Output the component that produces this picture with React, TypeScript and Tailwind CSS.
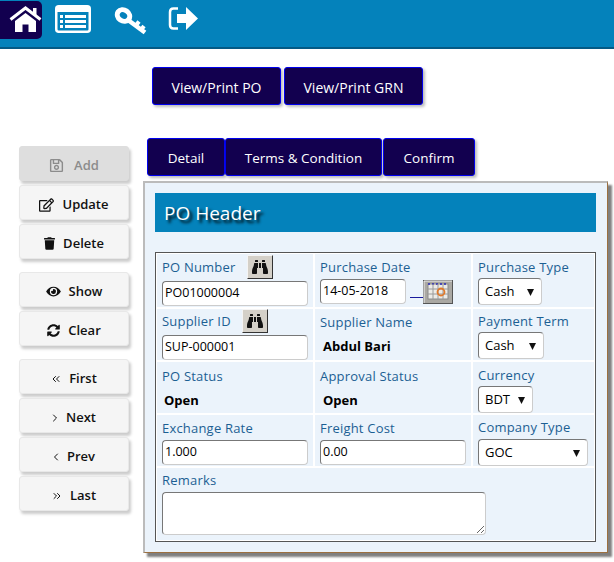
import type { ReactNode } from 'react';
import {
  FaRegSave,
  FaRegEdit,
  FaTrash,
  FaEye,
  FaSyncAlt,
  FaBinoculars,
} from 'react-icons/fa';
import { ChevronLeft, ChevronRight, ChevronsLeft, ChevronsRight } from 'lucide-react';

const fieldBorder =
  'border border-[#ccc] border-t-[#777] border-l-[#777] rounded-[4px] bg-white';
const cell = 'bg-[#ebf3fb] pl-[5px]';
const boldValue = 'mt-[6px] text-[13px] leading-[18px] font-bold text-black';

function SideButton({
  icon,
  label,
  disabled,
}: {
  icon: ReactNode;
  label: string;
  disabled?: boolean;
}) {
  return (
    <button
      className={`w-[110px] h-[35px] pt-[4px] flex items-center justify-center gap-[8px] rounded-[3px] border font-semibold text-[13px] shadow-[2px_3px_3px_#ccc] ${
        disabled
          ? 'bg-[#dedede] border-[#dedede] text-[#8c8c8c]'
          : 'bg-[#f5f5f5] border-[#e8e8e8] text-[#111]'
      }`}
    >
      {icon}
      {label}
    </button>
  );
}

function NavyButton({ label, className }: { label: string; className: string }) {
  return (
    <button
      className={`h-[38px] pt-[2px] flex items-center justify-center rounded-[3px] border border-[#0000ee] bg-[#12004f] text-white font-medium shadow-[2px_2px_3px_#bbb] ${className}`}
    >
      {label}
    </button>
  );
}

function Label({ children }: { children: ReactNode }) {
  return <div className="text-[13px] leading-[18px] text-[#1c5f93] tracking-[0.2px]">{children}</div>;
}

function TextBox({ value, className }: { value: string; className: string }) {
  return (
    <div className={`h-[25px] flex items-center pl-[2px] text-[12.5px] text-black ${fieldBorder} ${className}`}>
      {value}
    </div>
  );
}

function SelectBox({ value, className }: { value: string; className: string }) {
  return (
    <div className={`h-[27px] flex items-center justify-between pl-[6px] pr-[7px] text-[13px] text-black ${fieldBorder} ${className}`}>
      {value}
      <svg width="7" height="8" viewBox="0 0 7 8" className="block">
        <path d="M0 1h7L3.5 8z" fill="#111" />
      </svg>
    </div>
  );
}

function FindButton() {
  return (
    <button className="w-[26px] h-[24px] flex items-center justify-center bg-[#d4d0c8] border border-[#f4f4f4] border-r-[#333] border-b-[#333]">
      <FaBinoculars className="w-[18px] h-[16px] text-[#111]" />
    </button>
  );
}

function CalendarIcon() {
  return (
    <svg width="30" height="24" viewBox="0 0 30 24" className="block">
      <rect x="0.5" y="0.5" width="29" height="23" fill="#aaa8a3" stroke="#555" />
      <path d="M1 1h28M1 1v22" stroke="#f0f0f0" />
      <rect x="5" y="4" width="20" height="15" fill="#ecebe7" stroke="#8a8a8a" />
      <path d="M5 4h20" stroke="#2a2ab8" strokeWidth="1.500" strokeDasharray="2 2" />
      <path d="M10 4v15M15 4v15M20 4v15M5 9h20M5 14h20" stroke="#9a9a9a" />
      <circle cx="18" cy="12" r="3.5" fill="none" stroke="#e0792a" strokeWidth="1.800" />
    </svg>
  );
}

function HomeIcon() {
  return (
    <svg width="33" height="26" viewBox="0 0 33 26" className="block">
      <path d="M1.5 13.5 16.5 2l15 11.5" fill="none" stroke="#fff" strokeWidth="3" />
      <path d="M24 2h3.5v7H24z" fill="#fff" />
      <path d="M6 15 16.5 7 27 15v11h-7.500v-7.500h-6V26H6z" fill="#fff" />
    </svg>
  );
}

function ListIcon() {
  return (
    <svg width="36" height="28" viewBox="0 0 36 28" className="block">
      <rect x="1.250" y="1.250" width="33.500" height="25.500" rx="2.500" fill="#0482bb" stroke="#fff" strokeWidth="2.500" />
      <path d="M1 1h34v6H1z" fill="#fff" />
      <path
        d="M5 10h3v3H5zM10 10h21v3H10zM5 15h3v3H5zM10 15h21v3H10zM5 20h3v3H5zM10 20h21v3H10z"
        fill="#fff"
      />
    </svg>
  );
}

function KeyIcon() {
  return (
    <svg width="33" height="28" viewBox="0 0 33 28" className="block">
      <ellipse cx="9.500" cy="8.500" rx="6.500" ry="5.500" fill="none" stroke="#fff" strokeWidth="5" transform="rotate(35 9.500 8.500)" />
      <path d="M14 13 31 25.500" stroke="#fff" strokeWidth="4.500" fill="none" />
      <path d="m21.500 19 3.500-4.500M27 23l3-4" stroke="#fff" strokeWidth="4" fill="none" />
    </svg>
  );
}

function ExitIcon() {
  return (
    <svg width="30" height="25" viewBox="0 0 30 25" className="block">
      <path d="M10 2.500H5.500Q2 2.500 2 6v13q0 3.500 3.500 3.500H10" fill="none" stroke="#fff" strokeWidth="2.500" />
      <path d="M9 8h9V1l12 11.500L18 24v-7H9z" fill="#fff" />
    </svg>
  );
}

export default function App() {
  return (
    <div className="w-[614px] h-[562px] overflow-hidden bg-white [font-family:'Open_Sans','Noto_Sans',sans-serif]">
      <header className="h-[49px] bg-[#0482bb] border-b-[2px] border-[#045a85] flex items-start">
        <div className="relative w-[42px] h-[38px] mt-[1px] bg-[#12004f] rounded-r-[5px]">
          <div className="absolute left-[9px] top-[5px]">
            <HomeIcon />
          </div>
        </div>
        <div className="ml-[13px] mt-[5px]">
          <ListIcon />
        </div>
        <div className="ml-[23px] mt-[7px]">
          <KeyIcon />
        </div>
        <div className="ml-[21px] mt-[6px]">
          <ExitIcon />
        </div>
      </header>

      <div className="flex pl-[19px]">
        <aside className="pt-[97px] flex flex-col">
          <div className="flex flex-col gap-[4px]">
            <SideButton disabled label="Add" icon={<FaRegSave className="w-[15px] h-[15px] mr-[2px]" />} />
            <SideButton label="Update" icon={<FaRegEdit className="w-[15px] h-[14px]" />} />
            <SideButton label="Delete" icon={<FaTrash className="w-[11px] h-[13px]" />} />
          </div>
          <div className="flex flex-col gap-[4px] mt-[13px]">
            <SideButton label="Show" icon={<FaEye className="w-[15px] h-[13px]" />} />
            <SideButton label="Clear" icon={<FaSyncAlt className="w-[13px] h-[13px]" />} />
          </div>
          <div className="flex flex-col gap-[4px] mt-[13px]">
            <SideButton label="First" icon={<ChevronsLeft className="w-[12px] h-[12px] -mx-[1px]" />} />
            <SideButton label="Next" icon={<ChevronRight className="w-[12px] h-[12px] -mx-[3px]" />} />
            <SideButton label="Prev" icon={<ChevronLeft className="w-[12px] h-[12px] -mx-[3px]" />} />
            <SideButton label="Last" icon={<ChevronsRight className="w-[12px] h-[12px] -mx-[1px]" />} />
          </div>
        </aside>

        <main className="ml-[14px] flex flex-col">
          <div className="flex gap-[3px] ml-[9px] mt-[18px] text-[14px]">
            <NavyButton label="View/Print PO" className="w-[129px]" />
            <NavyButton label="View/Print GRN" className="w-[139px]" />
          </div>
          <div className="flex ml-[4px] mt-[33px] text-[13.5px]">
            <NavyButton label="Detail" className="w-[78px]" />
            <NavyButton label="Terms & Condition" className="w-[157px]" />
            <NavyButton label="Confirm" className="w-[92px] ml-[1px]" />
          </div>

          <section className="mt-[5px] w-[465px] h-[372px] bg-[#ebf3fb] border border-[#bbb] border-r-[#9c7040] border-b-[#9c7040] border-t-[2px] border-l-[2px] px-[10px] pt-[10px] shadow-[4px_4px_2px_#808080]">
            <h2 className="h-[39px] w-[441px] bg-[#0482bb] pl-[9px] pt-[2px] flex items-center text-white text-[19px] font-medium [text-shadow:3px_3px_3px_#000]">
              PO Header
            </h2>
            <div className="mt-[20px] w-[441px] h-[290px] bg-white border border-[#555] p-[1px] grid grid-cols-[156px_156px_121px] grid-rows-[53px_51px_51px_51px_72px] gap-[2px]">
              <div className={`${cell} pt-[1px]`}>
                <div className="flex items-center gap-[12px]">
                  <Label>PO Number</Label>
                  <FindButton />
                </div>
                <TextBox value="PO01000004" className="w-[146px] mt-[2px]" />
              </div>
              <div className={`${cell} pt-[4px]`}>
                <Label>Purchase Date</Label>
                <div className="flex items-end mt-[3px]">
                  <TextBox value="14-05-2018" className="w-[86px]" />
                  <span className="w-[13px] ml-[4px] mb-[6px] border-b border-[#1a1a9c]" />
                  <CalendarIcon />
                </div>
              </div>
              <div className={`${cell} pt-[4px]`}>
                <Label>Purchase Type</Label>
                <SelectBox value="Cash" className="w-[64px] mt-[2px]" />
              </div>

              <div className={cell}>
                <div className="flex items-center gap-[11px]">
                  <Label>Supplier ID</Label>
                  <FindButton />
                </div>
                <TextBox value="SUP-000001" className="w-[146px] mt-[2px]" />
              </div>
              <div className={`${cell} pt-[4px]`}>
                <Label>Supplier Name</Label>
                <div className={`${boldValue} pl-[3px]`}>Abdul Bari</div>
              </div>
              <div className={`${cell} pt-[3px]`}>
                <Label>Payment Term</Label>
                <SelectBox value="Cash" className="w-[66px] mt-[2px]" />
              </div>

              <div className={`${cell} pt-[5px]`}>
                <Label>PO Status</Label>
                <div className={`${boldValue} pl-[2px]`}>Open</div>
              </div>
              <div className={`${cell} pt-[5px]`}>
                <Label>Approval Status</Label>
                <div className={`${boldValue} pl-[3px]`}>Open</div>
              </div>
              <div className={`${cell} pt-[4px]`}>
                <Label>Currency</Label>
                <SelectBox value="BDT" className="w-[55px] mt-[2px]" />
              </div>

              <div className={`${cell} pt-[4px]`}>
                <Label>Exchange Rate</Label>
                <TextBox value="1.000" className="w-[146px] mt-[3px]" />
              </div>
              <div className={`${cell} pt-[4px]`}>
                <Label>Freight Cost</Label>
                <TextBox value="0.00" className="w-[146px] mt-[3px]" />
              </div>
              <div className={`${cell} pt-[3px]`}>
                <Label>Company Type</Label>
                <SelectBox value="GOC" className="w-[110px] mt-[3px]" />
              </div>

              <div className={`col-span-3 ${cell} pt-[3px]`}>
                <Label>Remarks</Label>
                <textarea readOnly className={`block w-[324px] h-[43px] mt-[3px] ${fieldBorder}`} />
              </div>
            </div>
          </section>
        </main>
      </div>
    </div>
  );
}
